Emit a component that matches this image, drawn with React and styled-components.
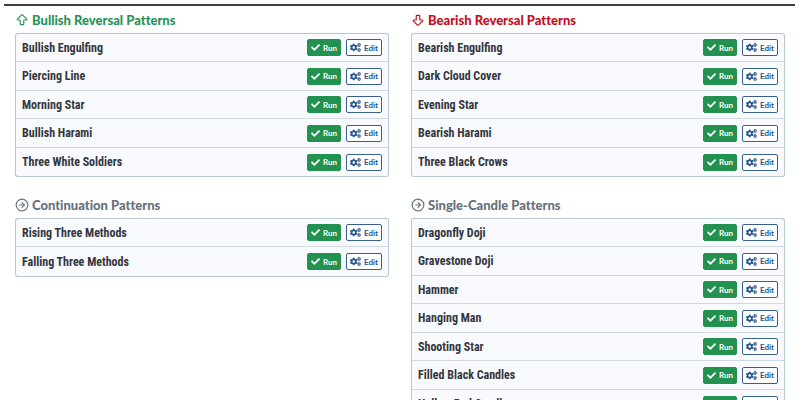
import styled, { createGlobalStyle } from "styled-components";
import { ArrowBigDown, ArrowBigUp, CircleArrowRight } from "lucide-react";
import { FaCheck, FaCogs } from "react-icons/fa";

const GlobalStyle = createGlobalStyle`
  * {
    box-sizing: border-box;
  }
  body {
    margin: 0;
    background: #fff;
    font-family: Lato, "Liberation Sans", sans-serif;
  }
`;

const StyledPage = styled.main`
  margin: 4px 5px 0 4px;
  padding: 6px 10px 0 11px;
  border-top: 2px solid #3c3d42;
  display: grid;
  grid-template-columns: 1fr 1fr;
  align-items: start;
  gap: 20px 22px;
`;

const StyledHeading = styled.h2`
  margin: 0 0 5px;
  display: flex;
  align-items: center;
  gap: 3px;
  color: ${({ $color }) => $color};
  font-size: 13px;
  font-weight: 900;
  font-variant-ligatures: none;
  line-height: 16px;
`;

const StyledList = styled.ul`
  margin: 0;
  padding: 0;
  list-style: none;
  background: #f8fafd;
  border: 1px solid #b9c8d2;
  border-radius: 3px;
  box-shadow: 0 0 1px #c6d0d8;
`;

const StyledRow = styled.li`
  height: 28px;
  padding: 0 6px;
  display: flex;
  align-items: center;
  gap: 5px;
  border-bottom: 1px solid #d0d8e0;
  &:nth-child(even) {
    height: 29px;
  }
  &:last-child {
    border-bottom: none;
  }
  > span {
    flex: 1;
    color: #34363d;
    font-family: "Roboto Condensed", "Liberation Sans Narrow", Roboto,
      sans-serif;
    font-size: 12px;
    font-weight: 700;
    line-height: 16px;
  }
`;

const StyledButton = styled.button`
  height: 17px;
  padding: 0 3px;
  display: flex;
  align-items: center;
  gap: 3px;
  border: 1px solid ${({ $primary }) => ($primary ? "#23914f" : "#37618c")};
  border-radius: 2px;
  background: ${({ $primary }) => ($primary ? "#23914f" : "#fff")};
  color: ${({ $primary }) => ($primary ? "#fff" : "#28558a")};
  font-family: inherit;
  font-size: 8px;
  font-weight: 700;
  line-height: 12px;
  cursor: pointer;
`;

const groups = [
  {
    title: "Bullish Reversal Patterns",
    color: "#249457",
    Icon: ArrowBigUp,
    patterns: [
      "Bullish Engulfing",
      "Piercing Line",
      "Morning Star",
      "Bullish Harami",
      "Three White Soldiers",
    ],
  },
  {
    title: "Bearish Reversal Patterns",
    color: "#c40d20",
    Icon: ArrowBigDown,
    patterns: [
      "Bearish Engulfing",
      "Dark Cloud Cover",
      "Evening Star",
      "Bearish Harami",
      "Three Black Crows",
    ],
  },
  {
    title: "Continuation Patterns",
    color: "#66717d",
    Icon: CircleArrowRight,
    patterns: ["Rising Three Methods", "Falling Three Methods"],
  },
  {
    title: "Single-Candle Patterns",
    color: "#66717d",
    Icon: CircleArrowRight,
    patterns: [
      "Dragonfly Doji",
      "Gravestone Doji",
      "Hammer",
      "Hanging Man",
      "Shooting Star",
      "Filled Black Candles",
      "Hollow Red Candles",
    ],
  },
];

const PatternRow = ({ name }) => (
  <StyledRow>
    <span>{name}</span>
    <StyledButton type="button" $primary>
      <FaCheck size={9} />
      Run
    </StyledButton>
    <StyledButton type="button">
      <FaCogs size={11} />
      Edit
    </StyledButton>
  </StyledRow>
);

const App = () => {
  return (
    <>
      <GlobalStyle />
      <StyledPage>
        {groups.map(({ title, color, Icon, patterns }) => (
          <section key={title}>
            <StyledHeading $color={color}>
              <Icon size={14} />
              {title}
            </StyledHeading>
            <StyledList>
              {patterns.map((name) => (
                <PatternRow key={name} name={name} />
              ))}
            </StyledList>
          </section>
        ))}
      </StyledPage>
    </>
  );
};

export default App;
